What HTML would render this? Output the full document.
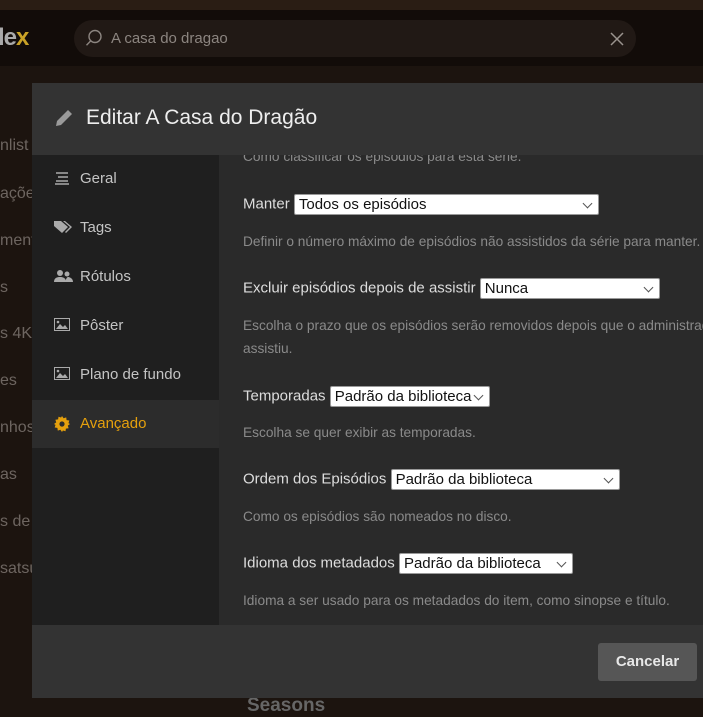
<!DOCTYPE html>
<html><head><meta charset="utf-8"><style>
*{box-sizing:border-box;margin:0;padding:0}
body{width:703px;height:711px;overflow:hidden;background:#1c140f;font-family:"Liberation Sans",sans-serif;position:relative}
.top{position:absolute;left:0;top:0;width:703px;height:10px;background:#2a1d14}
.bar{position:absolute;left:0;top:10px;width:703px;height:56px;background:#120c09}
.logo{position:absolute;left:-2px;top:24px;font-weight:bold;font-size:24px;color:#aaa;letter-spacing:-1px}
.logo span{color:#c9a227}
.search{position:absolute;left:74px;top:20px;width:562px;height:37px;border-radius:19px;background:#211915}
.search .t{position:absolute;left:37px;top:10px;font-size:15px;color:#8c8580}
.bg-side{position:absolute;left:0;color:#6d6560;font-size:16px}
.modal{position:absolute;left:32px;top:83px;width:680px;height:615px;background:#2a2a2a;overflow:hidden}
.hdr{position:absolute;left:0;top:0;width:100%;height:72px;background:#333;z-index:2}
.hdr .t{position:absolute;left:54px;top:23px;font-size:21px;color:#eee}
.side{position:absolute;left:0;top:72px;width:187px;height:470px;background:#1f1f1f}
.item{position:absolute;left:0;width:187px;height:48px;font-size:15px;color:#c4c4c4}
.item .l{position:absolute;left:48px;top:15px}
.item svg{position:absolute;left:22px;top:16px}
.item.act{background:#2c2c2c;color:#e5a00d}
.content{position:absolute;left:187px;top:72px;right:0;height:470px;color:#ddd;font-size:15px}
.c{position:absolute;left:24px;white-space:nowrap}
.d{font-size:13.7px;color:#8a8a8a}
.sel{display:inline-block;background:#fff;color:#111;border:1px solid #999;border-radius:2px;height:21px;padding:1px 4px;font-size:15px;vertical-align:middle;position:relative;overflow:hidden}
.sel:after{content:"";position:absolute;right:7px;top:5px;width:6px;height:6px;border-right:1px solid #555;border-bottom:1px solid #555;transform:rotate(45deg)}
.foot{position:absolute;left:0;top:542px;width:100%;height:73px;background:#333}
.btn{position:absolute;left:566px;top:18px;width:99px;height:38px;background:#565656;border-radius:3px;color:#e8e8e8;font-weight:bold;font-size:15px;text-align:center;line-height:38px}
.seasons{position:absolute;left:247px;top:695px;font-size:19px;font-weight:bold;color:#666}
</style></head><body>
<div class="top"></div><div class="bar"></div>
<div class="logo">le<span>x</span></div>
<div class="search">
<svg style="position:absolute;left:11px;top:9px" width="18" height="18" viewBox="0 0 18 18"><circle cx="10" cy="7.5" r="6" fill="none" stroke="#8c8580" stroke-width="1.4"/><path d="M5.8 11.8L1.5 16.2" stroke="#8c8580" stroke-width="1.4"/></svg>
<div class="t">A casa do dragao</div>
<svg style="position:absolute;left:536px;top:12px" width="14" height="14"><path d="M1 1L13 13M13 1L1 13" stroke="#9a938e" stroke-width="1.5"/></svg>
</div>
<div class="bg-side" style="top:137px">nlist</div>
<div class="bg-side" style="top:185px">ações</div>
<div class="bg-side" style="top:232px">ment</div>
<div class="bg-side" style="top:279px">s</div>
<div class="bg-side" style="top:325px">s 4K</div>
<div class="bg-side" style="top:372px">es</div>
<div class="bg-side" style="top:419px">nhos</div>
<div class="bg-side" style="top:466px">as</div>
<div class="bg-side" style="top:513px">s de T</div>
<div class="bg-side" style="top:560px">satsu</div>
<div class="seasons">Seasons</div>
<div class="modal">
<div class="hdr"><svg style="position:absolute;left:22px;top:25px" width="20" height="20" viewBox="0 0 20 20"><path d="M2 18l1-5L14 2l4 4L7 17z" fill="#9a9a9a"/></svg><div class="t">Editar A Casa do Dragão</div></div>
<div class="side">
<div class="item" style="top:0"><svg width="16" height="14"><path d="M2 2h12M4 6h10M2 10h12M1 13h14" stroke="#aaa" stroke-width="1.6"/></svg><span class="l">Geral</span></div>
<div class="item" style="top:49px"><svg width="18" height="15" viewBox="0 0 18 15"><path d="M0 1h7l7 6-6 6-8-7z" fill="#aaa"/><path d="M9 1h2l7 6-6 6-1-1 5-5z" fill="#aaa"/></svg><span class="l">Tags</span></div>
<div class="item" style="top:98px"><svg width="20" height="14"><circle cx="6" cy="4" r="3" fill="#aaa"/><path d="M0 13c0-4 3-5 6-5s6 1 6 5z" fill="#aaa"/><circle cx="13" cy="5" r="2.5" fill="#aaa"/><path d="M11 13c1-3 2-5 3-5s5 1 5 5z" fill="#aaa"/></svg><span class="l">Rótulos</span></div>
<div class="item" style="top:147px"><svg width="16" height="14"><rect x=".5" y=".5" width="15" height="12" fill="none" stroke="#aaa"/><path d="M2 11l4-5 3 3 2-2 3 4z" fill="#aaa"/><circle cx="4" cy="4" r="1.3" fill="#aaa"/></svg><span class="l">Pôster</span></div>
<div class="item" style="top:196px"><svg width="16" height="14"><rect x=".5" y=".5" width="15" height="12" fill="none" stroke="#aaa"/><path d="M2 11l4-5 3 3 2-2 3 4z" fill="#aaa"/><circle cx="4" cy="4" r="1.3" fill="#aaa"/></svg><span class="l">Plano de fundo</span></div>
<div class="item act" style="top:245px"><svg width="16" height="16" viewBox="0 0 16 16"><path d="M8 0l1.6 2.2 2.6-.8.4 2.7 2.7.4-.8 2.6L16 8l-2.2 1.6.8 2.6-2.7.4-.4 2.7-2.6-.8L8 16l-1.6-2.2-2.6.8-.4-2.7-2.7-.4.8-2.6L0 8l2.2-1.6-.8-2.6 2.7-.4.4-2.7 2.6.8z" fill="#e5a00d"/><circle cx="8" cy="8" r="2.6" fill="#2c2c2c"/></svg><span class="l">Avançado</span></div>
</div>
<div class="content">
<div class="c d" style="top:-6px">Como classificar os episódios para esta série.</div>
<div class="c" style="top:39px">Manter <span class="sel" style="width:305px">Todos os episódios</span></div>
<div class="c d" style="top:79px">Definir o número máximo de episódios não assistidos da série para manter.</div>
<div class="c" style="top:123px">Excluir episódios depois de assistir <span class="sel" style="width:180px">Nunca</span></div>
<div class="c d" style="top:163px">Escolha o prazo que os episódios serão removidos depois que o administrador</div>
<div class="c d" style="top:186px">assistiu.</div>
<div class="c" style="top:231px">Temporadas <span class="sel" style="width:160px;padding-right:18px">Padrão da biblioteca</span></div>
<div class="c d" style="top:270px">Escolha se quer exibir as temporadas.</div>
<div class="c" style="top:314px">Ordem dos Episódios <span class="sel" style="width:229px">Padrão da biblioteca</span></div>
<div class="c d" style="top:354px">Como os episódios são nomeados no disco.</div>
<div class="c" style="top:398px">Idioma dos metadados <span class="sel" style="width:174px">Padrão da biblioteca</span></div>
<div class="c d" style="top:438px">Idioma a ser usado para os metadados do item, como sinopse e título.</div>
</div>
<div class="foot"><div class="btn">Cancelar</div></div>
</div>
</body></html>
